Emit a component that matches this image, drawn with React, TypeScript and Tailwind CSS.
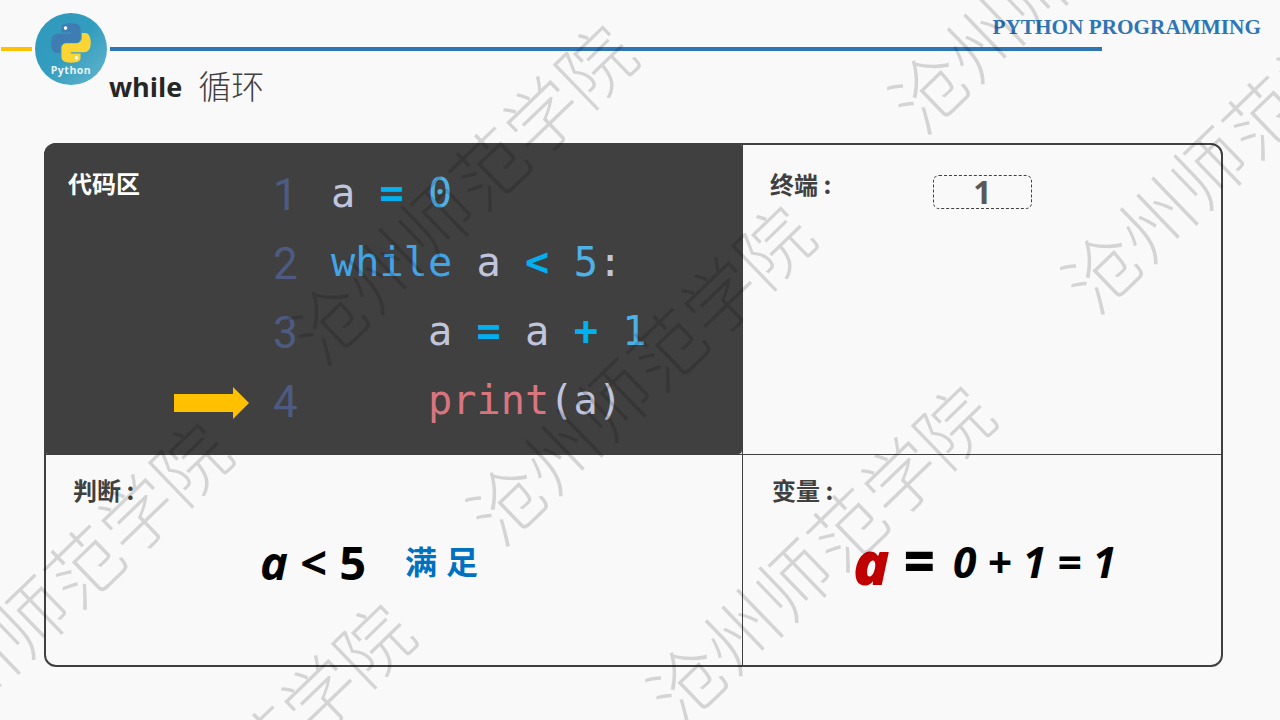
const WATERMARKS = [
  'left-[460px] top-[191px]',
  'left-[55px] top-[589px]',
  'left-[638px] top-[372px]',
  'left-[818px] top-[552px]',
  'left-[238px] top-[770px]',
  'left-[1060px] top-[-40px]',
  'left-[1233px] top-[140px]',
]

const CJK = "font-['Noto_Sans_CJK_SC',sans-serif]"
const SANS = "font-['Open_Sans',sans-serif]"

const KW = 'text-[#42a5e8]'
const OP = 'font-bold text-[#00b0f0]'
const NUM = 'text-[#4fb0e5]'
const VAR = 'text-[#c0c5dc]'

function PythonLogo() {
  const snake = 'M54.9.9c-4.6 0-8.9.4-12.8 1.1C30.8 4 28.8 8.2 28.8 15.9v10.2h26.3v3.4H18.9c-7.6 0-14.3 4.6-16.4 13.3-2.4 10-2.5 16.2 0 26.6 1.9 7.8 6.3 13.3 13.9 13.3h9V70.4c0-8.7 7.5-16.3 16.4-16.3h26.3c7.3 0 13.1-6 13.1-13.3V15.9c0-7.1-6-12.4-13.1-13.6C63.1 1.5 59.5.9 54.9.9z'
  return (
    <div className="flex h-[72px] w-[72px] shrink-0 flex-col items-center rounded-full bg-gradient-to-br from-[#2f98bb] via-[#339dbf] to-[#62b6cd] pt-[10px]">
      <svg viewBox="0 0 110 110" className="h-[40px] w-[40px]">
        <path d={snake} fill="#3e7cb1" />
        <circle cx="40" cy="14" r="5" fill="#fff" />
        <g transform="rotate(180 55 55)">
          <path d={snake} fill="#fcd434" />
          <circle cx="40" cy="14" r="5" fill="#fff" />
        </g>
      </svg>
      <span className={`${SANS} text-[10.5px] leading-[14px] font-bold tracking-[0.5px] text-[#e8f4f7]`}>Python</span>
    </div>
  )
}

function CodeLine({ n, arrow, children }: { n: number; arrow?: boolean; children: React.ReactNode }) {
  return (
    <div className="relative flex h-[69px] items-center">
      {arrow && (
        <svg viewBox="0 0 75 32" className="absolute left-[-99px] top-[20px] h-[32px] w-[75px]">
          <path d="M0 7h59V0l16 16-16 16v-7H0z" fill="#ffc000" />
        </svg>
      )}
      <span className="w-[58px] font-['Roboto',sans-serif] text-[44px] text-[#4d5b82]">{n}</span>
      <span className="font-['DejaVu_Sans_Mono',monospace] text-[40.3px] whitespace-pre">{children}</span>
    </div>
  )
}

export default function App() {
  return (
    <div className="relative flex h-[720px] w-[1280px] flex-col overflow-hidden bg-[#f9f9f9]">
      <header className="relative mt-[13px] flex h-[72px] items-center pl-px">
        <div className="mr-[3px] h-[4px] w-[31px] bg-[#ffc000]" />
        <PythonLogo />
        <div className="ml-[3px] h-[4px] w-[992px] bg-[#2e75b6]" />
        <span className="absolute top-[1px] right-[19px] font-['Liberation_Serif',serif] text-[21.25px] leading-[26px] font-bold text-[#2e75b6]">
          PYTHON PROGRAMMING
        </span>
      </header>

      <h1 className="mt-[-18px] ml-[109px] flex h-[40px] items-center">
        <span className={`${SANS} text-[27px] font-bold text-[#262626]`}>while</span>
        <span className={`${CJK} mt-[-2px] ml-[16px] text-[33px] font-light text-[#404040]`}>循环</span>
      </h1>

      <main className="mt-[36px] ml-[44px] grid h-[524px] w-[1179px] grid-cols-[696px_1fr] grid-rows-[309px_1fr] rounded-[12px] border-2 border-[#404040]">
        <section className="relative m-[-2px] mr-0 mb-0 rounded-tl-[12px] rounded-tr-[4px] rounded-br-[4px] rounded-bl-[4px] bg-[#404040]">
          <h2 className={`${CJK} absolute top-[24px] left-[24px] text-[24px] leading-[32px] font-bold text-white`}>代码区</h2>
          <div className="pt-[17px] pl-[229px]">
            <CodeLine n={1}>
              <span className={VAR}>a </span><span className={OP}>=</span> <span className={NUM}>0</span>
            </CodeLine>
            <CodeLine n={2}>
              <span className={KW}>while</span><span className={VAR}> a </span><span className={OP}>&lt;</span> <span className={NUM}>5</span><span className={VAR}>:</span>
            </CodeLine>
            <CodeLine n={3}>
              <span className={VAR}>    a </span><span className={OP}>=</span><span className={VAR}> a </span><span className={OP}>+</span> <span className={NUM}>1</span>
            </CodeLine>
            <CodeLine n={4} arrow>
              <span className="text-[#d9757f]">    print</span><span className={VAR}>(a)</span>
            </CodeLine>
          </div>
        </section>

        <section className="flex items-start border-l border-[#404040] pt-[23px] pl-[27px]">
          <h2 className={`${CJK} w-[163px] text-[24px] leading-[32px] font-bold text-[#404040]`}>终端 :</h2>
          <div className={`${SANS} mt-[7px] flex h-[34px] w-[99px] items-center justify-center rounded-[6px] border-[1.5px] border-dashed border-[#404040] text-[32px] font-bold text-[#595959]`}>
            1
          </div>
        </section>

        <section className="border-t border-[#404040] pt-[19px] pl-[27px]">
          <h2 className={`${CJK} text-[24px] leading-[32px] font-bold text-[#404040]`}>判断 :</h2>
          <div className="mt-[24px] ml-[187px] flex h-[64px] items-center text-black">
            <span className={`${SANS} text-[47px] font-bold`}><i>a</i> &lt; 5</span>
            <span className={`${CJK} mt-[-4px] ml-[39px] text-[32px] font-bold tracking-[9px] text-[#0070c0]`}>满足</span>
          </div>
        </section>

        <section className="border-t border-l border-[#404040] pt-[19px] pl-[29px]">
          <h2 className={`${CJK} text-[24px] leading-[32px] font-bold text-[#404040]`}>变量 :</h2>
          <div className={`${SANS} mt-[24px] ml-[81px] flex h-[64px] items-center font-bold text-black italic`}>
            <span className="text-[60px] font-extrabold text-[#c00000]">a</span>
            <span className="mt-[-4px] ml-[14px] text-[54px] font-extrabold not-italic">=</span>
            <span className="ml-[18px] text-[42.5px] whitespace-pre">0 + 1 = 1</span>
          </div>
        </section>
      </main>

      <div className="pointer-events-none absolute inset-0">
        {WATERMARKS.map(pos => (
          <span
            key={pos}
            className={`absolute ${pos} ${CJK} -translate-x-1/2 -translate-y-1/2 -rotate-[44deg] text-[74px] leading-none font-light whitespace-nowrap text-black/15`}
          >
            沧州师范学院
          </span>
        ))}
      </div>
    </div>
  )
}
